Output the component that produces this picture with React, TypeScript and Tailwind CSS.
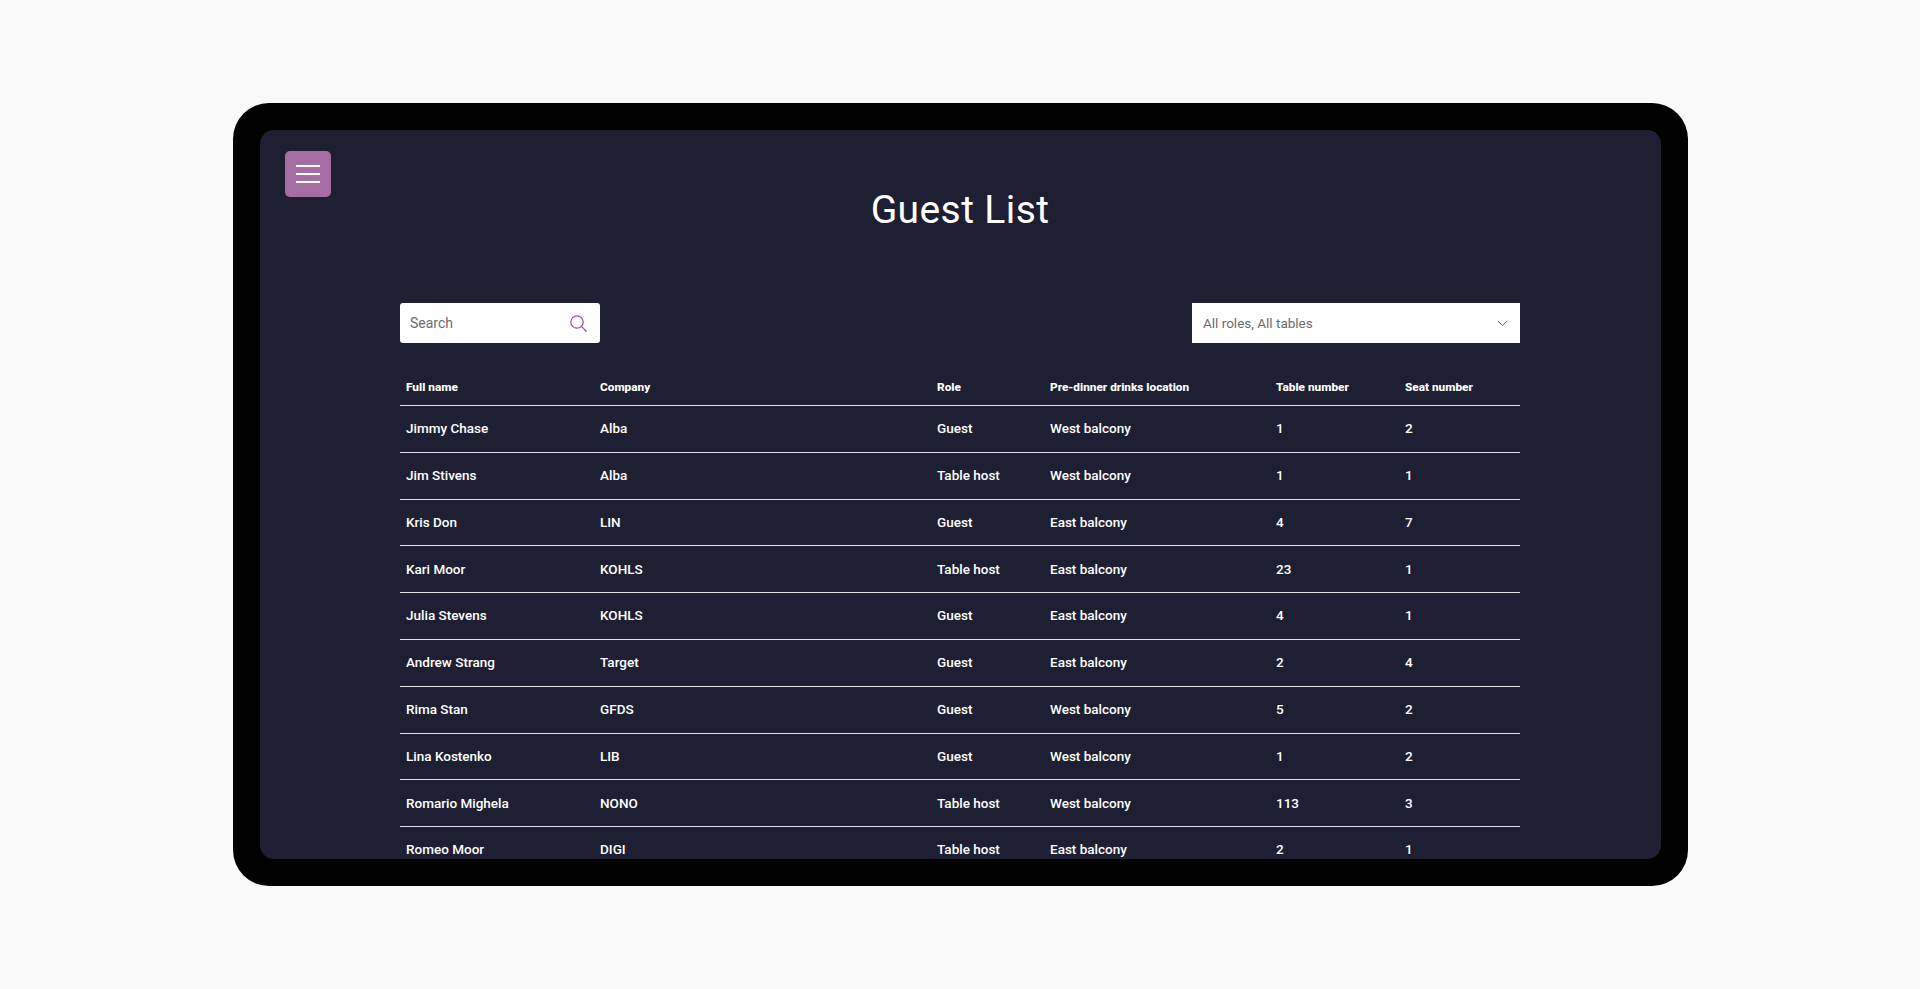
import React from "react";
import { ChevronDown } from "lucide-react";

const guests = [
  ["Jimmy Chase", "Alba", "Guest", "West balcony", "1", "2"],
  ["Jim Stivens", "Alba", "Table host", "West balcony", "1", "1"],
  ["Kris Don", "LIN", "Guest", "East balcony", "4", "7"],
  ["Kari Moor", "KOHLS", "Table host", "East balcony", "23", "1"],
  ["Julia Stevens", "KOHLS", "Guest", "East balcony", "4", "1"],
  ["Andrew Strang", "Target", "Guest", "East balcony", "2", "4"],
  ["Rima Stan", "GFDS", "Guest", "West balcony", "5", "2"],
  ["Lina Kostenko", "LIB", "Guest", "West balcony", "1", "2"],
  ["Romario Mighela", "NONO", "Table host", "West balcony", "113", "3"],
  ["Romeo Moor", "DIGI", "Table host", "East balcony", "2", "1"],
];

const headers = ["Full name", "Company", "Role", "Pre-dinner drinks location", "Table number", "Seat number"];

const columns = "grid grid-cols-[194px_337px_113px_226px_129px_122px]";

export default function App() {
  return (
    <div className="flex h-[989px] items-start justify-center bg-[#f9f9f9] pt-[103px] pl-px font-['Roboto',sans-serif]">
      <div className="h-[783px] w-[1455px] rounded-[36px] bg-black p-[27px]">
        <div className="relative h-[729px] overflow-hidden rounded-[14px] bg-[#1f1f33] pl-[140px] pr-[141px]">
          <button className="absolute left-[25px] top-[21px] flex h-[46px] w-[46px] flex-col items-center justify-center gap-[6px] rounded-[5px] bg-[#a56da3]">
            <span className="h-[2px] w-[24px] bg-white" />
            <span className="h-[2px] w-[24px] bg-white" />
            <span className="h-[2px] w-[24px] bg-white" />
          </button>

          <h1 className="pt-[57px] text-center text-[39px] leading-[46px] font-normal tracking-[0.4px] text-white">Guest List</h1>

          <div className="mt-[70px] flex items-center justify-between">
            <div className="flex h-[40px] w-[200px] items-center justify-between rounded-[3px] bg-white pl-[10px] pr-[13px]">
              <span className="text-[14px] text-[#6b6b6f]">Search</span>
              <svg width="17" height="17" viewBox="0 0 17 17" fill="none" stroke="#a0509e" strokeWidth="1.3">
                <circle cx="7" cy="7" r="6.2" />
                <path d="M11.4 11.4 16.6 16.6" />
              </svg>
            </div>
            <div className="flex h-[40px] w-[328px] items-center justify-between bg-white pl-[11px] pr-[9px]">
              <span className="text-[13.5px] text-[#6b6b6f]">All roles, All tables</span>
              <ChevronDown className="h-[17px] w-[17px] text-[#4a4a50]" strokeWidth={1.3} />
            </div>
          </div>

          <div className={`${columns} mt-[35px] h-[28px] border-b border-[#e4e2ea] pl-[6px] pt-[1px] text-[11.8px] leading-[16px] font-extrabold text-white`}>
            {headers.map((h) => (
              <div key={h}>{h}</div>
            ))}
          </div>

          {guests.map((g) => (
            <div key={g[0]} className={`${columns} h-[46.8px] items-center border-b border-[#e4e2ea] pb-[1px] pl-[6px] text-[13.5px] font-medium text-white`}>
              {g.map((cell, i) => (
                <div key={i}>{cell}</div>
              ))}
            </div>
          ))}
        </div>
      </div>
    </div>
  );
}
